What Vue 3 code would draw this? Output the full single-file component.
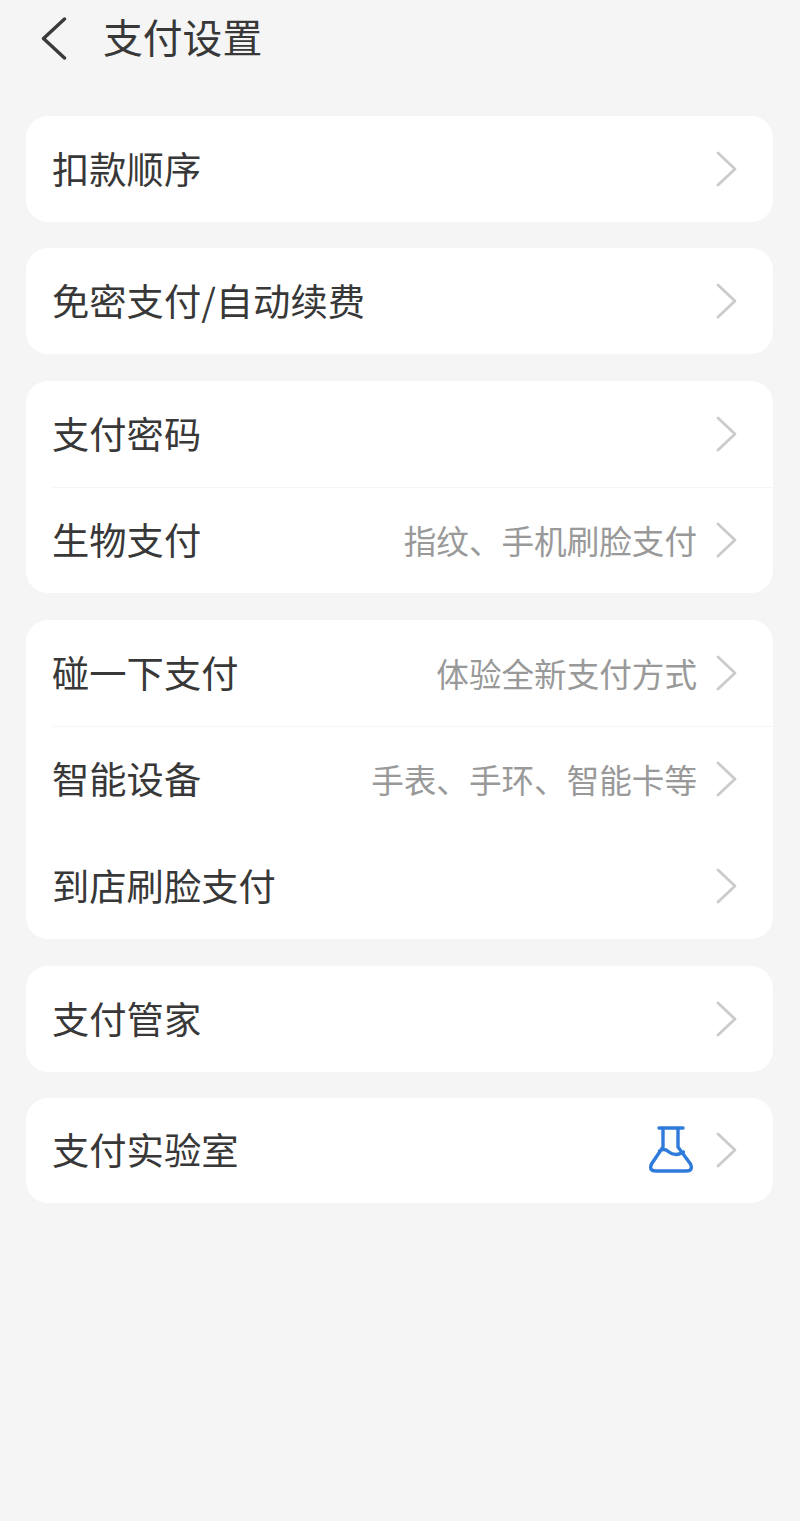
<template>
  <div class="page">
    <header class="top-bar">
      <svg class="back" width="28" height="44" viewBox="0 0 28 44">
        <path d="M24.500 2 L3.500 21.500 L24.500 41" fill="none" stroke="#3a3a3a" stroke-width="3.400" stroke-linecap="round" stroke-linejoin="round" />
      </svg>
      <h1 class="title">支付设置</h1>
    </header>

    <section v-for="(group, i) in groups" :key="i" class="card">
      <div
        v-for="row in group"
        :key="row.name"
        :class="['row', { 'row-line': row.line }]"
      >
        <span class="name">{{ row.name }}</span>
        <span v-if="row.desc" class="desc">{{ row.desc }}</span>
        <svg v-if="row.lab" class="flask" width="46" height="48" viewBox="0 0 46 48">
          <path
            d="M11 2 H35 M15 2 V21 L3.500 38 Q0.500 45 8 45 H38 Q45.500 45 42.500 38 L30 21 V2 M11.500 25 Q16.500 21.500 21 26 Q27 31 35.500 26"
            fill="none"
            stroke="#2f7bdc"
            stroke-width="3.400"
            stroke-linecap="round"
            stroke-linejoin="round"
          />
        </svg>
        <svg class="arrow" width="22" height="36" viewBox="0 0 22 36">
          <path d="M3 2 L20 18 L3 34" fill="none" stroke="#cbcbcb" stroke-width="2.800" stroke-linecap="round" stroke-linejoin="round" />
        </svg>
      </div>
    </section>
  </div>
</template>

<script setup>
const groups = [
  [{ name: '扣款顺序' }],
  [{ name: '免密支付/自动续费' }],
  [
    { name: '支付密码', line: true },
    { name: '生物支付', desc: '指纹、手机刷脸支付' },
  ],
  [
    { name: '碰一下支付', desc: '体验全新支付方式', line: true },
    { name: '智能设备', desc: '手表、手环、智能卡等' },
    { name: '到店刷脸支付' },
  ],
  [{ name: '支付管家' }],
  [{ name: '支付实验室', lab: true }],
]
</script>

<style scoped>
.page {
  height: 1521px;
  box-sizing: border-box;
  padding: 0 27px 0 26px;
  background: #f5f5f5;
  font-family: "Noto Sans CJK SC", "Liberation Sans", sans-serif;
  overflow: hidden;
}

.top-bar {
  display: flex;
  align-items: center;
  height: 78px;
  margin-bottom: 38px;
  padding-left: 14px;
}

.back {
  flex: none;
}

.title {
  margin: 0 0 6px 35px;
  font-size: 39.800px;
  font-weight: 400;
  line-height: 72px;
  color: #383838;
}

.card {
  margin-bottom: 27px;
  background: #fff;
  border-radius: 22px;
}

.card:nth-of-type(1),
.card:nth-of-type(5) {
  margin-bottom: 26px;
}

.row {
  position: relative;
  display: flex;
  align-items: center;
  height: 106px;
  padding: 0 36px 0 26px;
}

.card:nth-of-type(4) .row {
  height: 106.340px;
}

.card:nth-of-type(6) .row {
  height: 105px;
}

.row-line::after {
  content: '';
  position: absolute;
  left: 27px;
  right: 0;
  bottom: -1px;
  height: 1px;
  background: #f5f5f5;
}

.name {
  flex: 1;
  margin-bottom: 2px;
  font-size: 37.300px;
  color: #383838;
}

.desc {
  margin-bottom: 2px;
  font-size: 32.600px;
  color: #999;
}

.flask {
  margin-right: 3px;
}

.arrow {
  flex: none;
  margin-left: 18px;
}
</style>

<style>
html,
body {
  margin: 0;
  background: #f5f5f5;
}
</style>
